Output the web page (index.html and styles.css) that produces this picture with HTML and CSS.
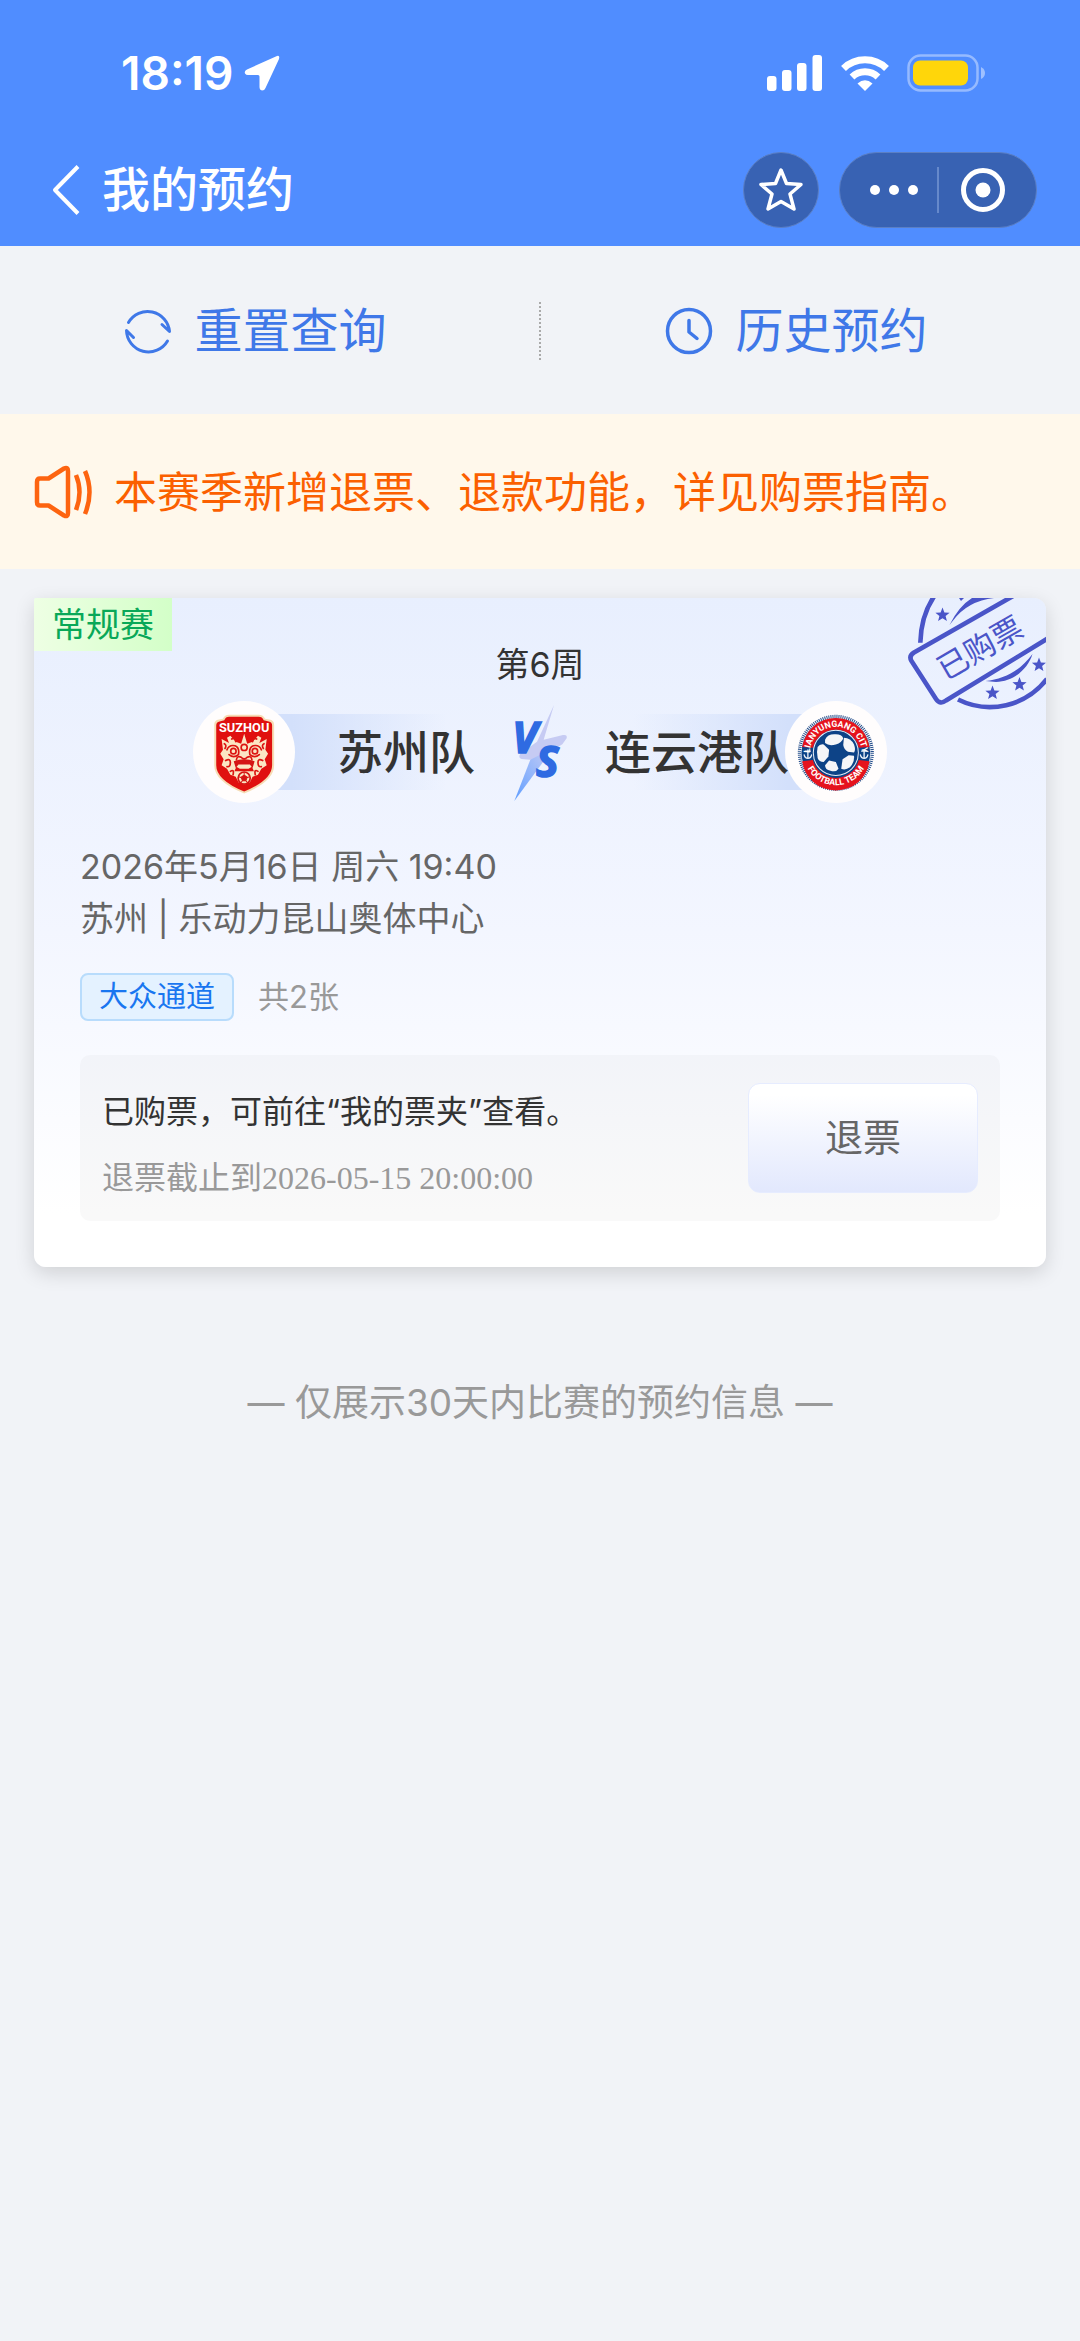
FILE: index.html
```html
<!DOCTYPE html>
<html lang="zh-CN">
<head>
<meta charset="utf-8">
<meta name="viewport" content="width=device-width, initial-scale=1">
<title>我的预约</title>
<link rel="stylesheet" href="styles.css">
</head>
<body>
<header class="header">
  <div class="status">
    <div class="status-side">
      <span class="clock">18:19</span>
      <svg class="locate" width="36" height="36" viewBox="0 0 36 36" aria-hidden="true"><path d="M33 1 3 14.500Q0 16 1 18.500Q2 20 4 20L14 20Q15.500 20 15.500 21.500L15.500 32Q15.500 35 18 35.500Q20.500 35.500 21.500 33L35 4Q36 0 33 1Z" fill="#fff"/></svg>
    </div>
    <div class="status-side status-icons">
      <svg width="56" height="36" viewBox="0 0 56 36" fill="#fff" aria-hidden="true"><rect x="0" y="21" width="9.500" height="15" rx="3"/><rect x="15" y="15" width="9.500" height="21" rx="3"/><rect x="30" y="8" width="9.500" height="28" rx="3"/><rect x="45.500" y="0" width="9.500" height="36" rx="3"/></svg>
      <svg width="48" height="36" viewBox="0 0 48 36" aria-hidden="true"><g fill="none" stroke="#fff" stroke-width="7"><path d="M2.500 13.500A31 31 0 0 1 45.500 13.500"/><path d="M11 22A19 19 0 0 1 37 22"/></g><path d="M24 36 16.500 28.500Q24 22 31.500 28.500Z" fill="#fff"/></svg>
      <svg width="79" height="38" viewBox="0 0 79 38" aria-hidden="true"><rect x="1.500" y="1.500" width="69" height="35" rx="12" fill="none" stroke="#fff" stroke-opacity=".4" stroke-width="2.500"/><rect x="6" y="6.500" width="55" height="25" rx="7" fill="#ffd60a"/><path d="M74 13Q78 15 78 19T74 25Z" fill="#fff" fill-opacity=".45"/></svg>
    </div>
  </div>
  <nav class="nav">
    <a class="back" href="#" aria-label="返回"><svg width="30" height="50" viewBox="0 0 30 50" aria-hidden="true"><path d="M28 1.500 5 25 28 48.500" fill="none" stroke="#fff" stroke-width="4" stroke-linejoin="round"/></svg></a>
    <h1 class="title">我的预约</h1>
    <button class="round" type="button" aria-label="收藏"><svg width="46" height="46" viewBox="0 0 46 46" aria-hidden="true"><path d="M23 3 28.500 16.500 43 17.500 32 27 36 42 23 34.500 10 42 14 27 3 17.500 17.500 16.500Z" fill="none" stroke="#fff" stroke-width="3.500" stroke-linejoin="round"/></svg></button>
    <div class="capsule">
      <button class="capsule-btn more" type="button" aria-label="更多"><svg width="50" height="46" viewBox="0 0 50 46" fill="#fff" aria-hidden="true"><circle cx="6" cy="23" r="5"/><circle cx="25" cy="23" r="5"/><circle cx="44" cy="23" r="5"/></svg></button>
      <span class="capsule-line"></span>
      <button class="capsule-btn close" type="button" aria-label="关闭"><svg width="46" height="46" viewBox="0 0 46 46" aria-hidden="true"><circle cx="23" cy="23" r="19.500" fill="none" stroke="#fff" stroke-width="5"/><circle cx="23" cy="23" r="7.500" fill="#fff"/></svg></button>
    </div>
  </nav>
</header>

<main>
  <div class="actions">
    <button class="action" type="button">
      <svg width="48" height="48" viewBox="0 0 48 48" fill="none" stroke="#3f78e8" stroke-width="3" stroke-linecap="round" stroke-linejoin="round" aria-hidden="true"><path d="M4.500 15.500A22 22 0 0 1 45.500 24.500L38 17.500"/><path d="M43.500 34A22 22 0 0 1 2.500 23.500L9.500 30.500"/></svg>
      重置查询
    </button>
    <span class="actions-line"></span>
    <button class="action" type="button">
      <svg width="48" height="48" viewBox="0 0 48 48" fill="none" stroke="#3f78e8" stroke-width="3.500" stroke-linecap="round" stroke-linejoin="round" aria-hidden="true"><circle cx="24" cy="24" r="21.500"/><path d="M24 13.500V25L32 31.500"/></svg>
      历史预约
    </button>
  </div>

  <div class="notice">
    <svg width="60" height="54" viewBox="0 0 60 54" fill="none" stroke="#fd6410" stroke-width="4.500" stroke-linejoin="round" aria-hidden="true"><path d="M6 13.500H14.500L30 3.500Q34 1.500 34 6V48Q34 52.500 30 50.500L14.500 40.500H6Q3 40.500 3 37V17Q3 13.500 6 13.500Z"/><path d="M42 10Q49 27 42 45M51 6Q60 27 51 49"/></svg>
    <p class="notice-text">本赛季新增退票、退款功能，详见购票指南。</p>
  </div>

  <article class="card">
    <span class="stage">常规赛</span>
    <svg class="stamp" width="140" height="130" viewBox="0 0 140 130" aria-hidden="true">
      <defs><path id="star" d="M0-7.500 1.900-2.600 7.100-2.300 3.100 1 4.400 6.100 0 3.200-4.400 6.100-3.100 1-7.100-2.300-1.900-2.600Z"/></defs>
      <g fill="none" stroke="#4a55c8" stroke-width="4.600">
        <path d="M108-2.500 8 54.500Q2.500 58 5.500 63L30 101Q34 107 40 102.500L145 38.500" stroke-linejoin="round"/>
        <path d="M14.300 44.700Q15 17 29-3"/>
        <path d="M52 101.500A72 72 0 0 0 141 81"/>
      </g>
      <g fill="#4a55c8">
        <path d="M43.500 27Q53 8 66 0H88Q62 3 47.500 22Z"/>
        <path d="M79.500 83C98 81 114 73 126.500 56C122 71 107 84 90 84Z"/>
        <use href="#star" x="36.500" y="17"/><use href="#star" x="86.500" y="95"/><use href="#star" x="113.500" y="86.500"/><use href="#star" x="133" y="67"/><path d="M53 0H58L55 3Z"/>
      </g>
      <text class="stamp-text" x="74" y="61" text-anchor="middle" transform="rotate(-30 74 50)">已购票</text>
    </svg>

    <p class="week">第6周</p>

    <div class="match">
      <div class="team home">
        <svg class="crest" width="102" height="102" viewBox="11 31 303 303" role="img" aria-label="苏州队">
          <circle cx="162.500" cy="182.500" r="151.500" fill="#fffdfd"/>
          <path d="M100 84Q105 72 118 72H206Q220 72 225 84L238 86Q252 88 252 102V222Q252 270 163 306Q74 270 74 222V102Q74 88 88 86Z" fill="#f6ddb6"/>
          <path d="M104 88Q108 78 118 78H206Q217 78 221 88L236 92Q246 94 246 104V222Q246 266 163 300Q80 266 80 222V104Q80 94 90 92Z" fill="#e0100f"/>
          <text x="163" y="124" class="crest-home" text-anchor="middle">SUZHOU</text>
          <path d="M163 128 172 158 188 152 204 134 214 140 208 156 230 144 226 176 234 188 224 204 230 222 214 232 204 250 188 256 180 272 163 280 146 272 138 256 122 250 112 232 96 222 102 204 92 188 100 176 96 144 118 156 112 140 122 134 138 152 154 158Z" fill="#fbe6c4"/>
          <g fill="none" stroke="#dc1512" stroke-width="5" stroke-linecap="round">
            <circle cx="163" cy="169" r="9"/><circle cx="131" cy="180" r="8"/><circle cx="195" cy="180" r="8"/>
            <path d="M112 176Q118 160 136 164 150 170 146 190 132 202 118 190M214 176Q208 160 190 164 176 170 180 190 194 202 208 190"/>
            <path d="M126 144Q136 138 138 152M200 144Q190 138 188 152M104 158Q112 162 106 172M222 158Q214 162 220 172"/>
            <path d="M140 206Q142 192 154 198 163 208 172 198 184 192 186 206M108 208Q122 200 122 214 122 228 112 226M218 208Q204 200 204 214 204 228 214 226M122 240Q134 232 130 250M204 240Q192 232 196 250"/>
          </g>
          <path d="M132 210Q163 198 194 210L188 230 180 220H146L138 230Z" fill="#d51414"/>
          <path d="M140 226 150 232H176L186 226 192 240H134Z" fill="#e0100f"/>
          <circle cx="163" cy="260" r="18" fill="#fbe6c4" stroke="#d51414" stroke-width="5"/>
          <path d="M163 251 172 257 168 268H158L154 257ZM163 243V250M147 256 153 258M179 256 173 258M153 274 157 269M173 274 169 269" fill="#d51414" stroke="#d51414" stroke-width="3"/>
        </svg>
        <h2 class="team-name">苏州队</h2>
      </div>
      <svg class="versus" width="70" height="110" viewBox="0 0 210 330" role="img" aria-label="VS">
        <defs>
          <linearGradient id="bolt" x1="0" y1="1" x2="1" y2="0"><stop offset="0" stop-color="#5f9dff"/><stop offset=".5" stop-color="#8fb4fb"/><stop offset="1" stop-color="#bcc8f6"/></linearGradient>
        </defs>
        <path d="M147 24 116 128 174 114Q188 112 185 124L172 142 130 168 116 192 50 186Q38 182 46 170L96 134Z" fill="#c6cbf3"/>
        <path d="M28 312 76 188 104 174 126 172 112 198Z" fill="url(#bolt)"/>
        <text class="versus-text" x="22" y="168">V</text>
        <text class="versus-text" x="93" y="241">S</text>
      </svg>
      <div class="team away">
        <h2 class="team-name">连云港队</h2>
        <svg class="crest" width="102" height="102" viewBox="15 31 303 303" role="img" aria-label="连云港队">
          <defs><path id="arc-top" d="M89 185A77 77 0 0 1 243 185"/><path id="arc-bottom" d="M70 185A96 96 0 0 0 262 185"/></defs>
          <circle cx="166.500" cy="182.500" r="151.500" fill="#fffdfd"/>
          <circle cx="166" cy="185" r="108" fill="#f4f7fb" stroke="#27508c" stroke-width="10" stroke-dasharray="3 3"/>
          <circle cx="166" cy="185" r="102" fill="#0d4387"/>
          <path d="M66 168A101 101 0 0 1 266 168L234 170A70 70 0 0 0 98 170ZM66 210A101 101 0 0 0 266 210L234 206A70 70 0 0 1 98 206Z" fill="#e5131d"/>
          <circle cx="166" cy="185" r="67" fill="#0d4387" stroke="#e6edf6" stroke-width="3"/>
          <circle cx="166" cy="185" r="58" fill="#0d4387"/>
          <g fill="#f5f6f8">
            <path d="M134 146Q142 128 166 130 184 130 188 142 184 156 166 160 146 166 134 156Z"/>
            <path d="M190 140Q210 140 220 160 226 176 220 184L202 182Q190 176 188 162Z"/>
            <path d="M186 204 204 192 220 194Q222 212 208 228 194 238 182 232Z"/>
            <path d="M146 208 166 212 174 232Q166 244 150 238 134 236 134 222Z"/>
            <path d="M112 168Q118 158 130 160L146 176 144 196 130 212Q116 212 112 200 108 184 112 168Z"/>
          </g>
          <g fill="none" stroke="#e9eff8" stroke-width="4" stroke-linecap="round"><path d="M83 176V199M76 180H90M72 191Q74 201 83 201T94 191M250 176V199M243 180H257M239 191Q241 201 250 201T261 191"/></g>
          <text class="crest-away"><textPath href="#arc-top" startOffset="50%" text-anchor="middle">LIANYUNGANG CITY</textPath></text>
          <text class="crest-away"><textPath href="#arc-bottom" startOffset="50%" text-anchor="middle">FOOTBALL TEAM</textPath></text>
        </svg>
      </div>
    </div>

    <div class="meta">
      <p>2026年5月16日 周六 19:40</p>
      <p>苏州 | 乐动力昆山奥体中心</p>
    </div>

    <div class="channel">
      <span class="badge">大众通道</span>
      <span class="count">共2张</span>
    </div>

    <div class="refund">
      <div class="refund-info">
        <p class="refund-title">已购票，可前往“我的票夹”查看。</p>
        <p class="refund-limit">退票截止到2026-05-15 20:00:00</p>
      </div>
      <button class="refund-btn" type="button">退票</button>
    </div>
  </article>

  <p class="footnote">— 仅展示30天内比赛的预约信息 —</p>
</main>
</body>
</html>
```
FILE: styles.css
```css
* {
  box-sizing: border-box;
}

body {
  margin: 0;
  min-height: 100vh;
  background: #f1f3f7;
  color: #333;
  font-family: Inter, "Noto Sans CJK SC", sans-serif;
}

h1, h2, p {
  margin: 0;
}

svg {
  display: block;
  flex: none;
}

button {
  margin: 0;
  padding: 0;
  border: 0;
  background: none;
  color: inherit;
  font: inherit;
}

/* header */
.header {
  padding-bottom: 12px;
  background: #508dff;
  color: #fff;
}

.status {
  display: flex;
  justify-content: space-between;
  align-items: center;
  height: 146px;
  padding: 0 94px 0 121px;
}

.status-side {
  display: flex;
  align-items: center;
  gap: 11px;
}

.status-icons {
  gap: 18px;
}

.clock {
  font-size: 46px;
  font-weight: 600;
  line-height: 52px;
}

.nav {
  display: flex;
  align-items: center;
  height: 88px;
  padding: 0 43px 0 50px;
}

.back {
  margin-right: 22px;
}

.title {
  flex: 1;
  font-size: 48px;
  font-weight: 500;
  line-height: 64px;
}

.round,
.capsule {
  display: flex;
  align-items: center;
  justify-content: center;
  height: 76px;
  border: 1px solid #5b7fc4;
  border-radius: 38px;
  background: #3862b3;
}

.round {
  width: 76px;
  margin-right: 20px;
}

.capsule {
  width: 198px;
}

.capsule-btn {
  display: flex;
  flex: 1;
  justify-content: center;
}

.more {
  padding-left: 10px;
}

.close {
  padding-right: 10px;
}

.capsule-line {
  width: 2px;
  height: 46px;
  background: #6689cb;
}

/* quick actions */
.actions {
  display: flex;
  align-items: center;
  height: 168px;
  padding-top: 2px;
  color: #3f78e8;
}

.action {
  display: flex;
  flex: 1;
  align-items: center;
  justify-content: center;
  gap: 22px;
  padding-right: 28px;
  font-size: 48px;
  line-height: 64px;
}

.actions-line {
  height: 58px;
  border-left: 2px dotted #aaa;
}

/* notice */
.notice {
  display: flex;
  align-items: center;
  gap: 20px;
  height: 155px;
  padding: 0 34px;
  background: #fff8eb;
  color: #fb6000;
}

.notice-text {
  font-size: 43px;
  line-height: 64px;
}

/* booking card */
.card {
  position: relative;
  margin: 29px 34px 0;
  padding: 0 46px 46px;
  overflow: hidden;
  border-radius: 2px 12px 12px 12px;
  background: linear-gradient(#e8effe, #f3f6ff 50%, #fff 92%);
  box-shadow: 0 6px 20px rgba(0, 0, 0, .14);
}

.stage {
  display: block;
  width: fit-content;
  margin-left: -46px;
  padding: 0 18px;
  background: linear-gradient(90deg, #eeffe4, #d3ffc8);
  color: #09a858;
  font-size: 34px;
  line-height: 53px;
}

.stamp {
  position: absolute;
  top: 0;
  right: 0;
}

.stamp-text {
  fill: #4a55c8;
  font-size: 31px;
}

.week {
  margin-top: -12px;
  font-size: 34px;
  line-height: 52px;
  text-align: center;
}

.match {
  display: flex;
  align-items: center;
  justify-content: center;
  gap: 30px;
  margin-top: 6px;
}

.team {
  display: flex;
  align-items: center;
  width: 282px;
}

.home {
  justify-content: space-between;
  background: linear-gradient(90deg, transparent 50px, #d3e0fb 50px, #d3e0fb 35%, rgba(211, 224, 251, 0) 90%) center / 100% 76px no-repeat;
}

.away {
  background: linear-gradient(270deg, transparent 50px, #d3e0fb 50px, #d3e0fb 35%, rgba(211, 224, 251, 0) 90%) center / 100% 76px no-repeat;
}

.team-name {
  font-size: 46px;
  font-weight: 500;
  line-height: 64px;
  white-space: nowrap;
}

.away .team-name {
  width: 180px;
}

.crest-home {
  fill: #fff;
  font: 700 38px Roboto, sans-serif;
}

.crest-away {
  fill: #fff;
  font: 700 26px "Liberation Sans Narrow", Roboto, sans-serif;
}

.versus-text {
  fill: #2f6be2;
  stroke: #2f6be2;
  stroke-width: 5px;
  font: italic 700 128px "Open Sans", sans-serif;
}

.meta {
  margin-top: 34px;
  color: #666;
  font-size: 34px;
  line-height: 52px;
}

.channel {
  display: flex;
  align-items: center;
  gap: 24px;
  margin-top: 28px;
}

.badge {
  padding: 0 17px;
  border: 2px solid #b8dcfc;
  border-radius: 8px;
  background: #e4f2ff;
  color: #1976f0;
  font-size: 29px;
  line-height: 44px;
}

.count {
  color: #999;
  font-size: 31px;
  line-height: 48px;
}

.refund {
  display: flex;
  align-items: center;
  justify-content: space-between;
  margin-top: 34px;
  padding: 0 22px;
  border-radius: 10px;
  background: rgba(110, 110, 110, .045);
}

.refund-info {
  padding: 24px 0 10px;
  font-size: 32px;
  line-height: 66px;
}

.refund-limit {
  color: #999;
  font-family: "Liberation Serif", "Noto Sans CJK SC", serif;
}

.refund-btn {
  width: 230px;
  height: 110px;
  padding-bottom: 8px;
  border: 1px solid #e6ecff;
  border-radius: 12px;
  background: linear-gradient(#fff 10%, #e2e8fd);
  color: #666;
  font-size: 38px;
}

.footnote {
  margin-top: 110px;
  color: #999;
  font-size: 37px;
  line-height: 52px;
  text-align: center;
}
```
